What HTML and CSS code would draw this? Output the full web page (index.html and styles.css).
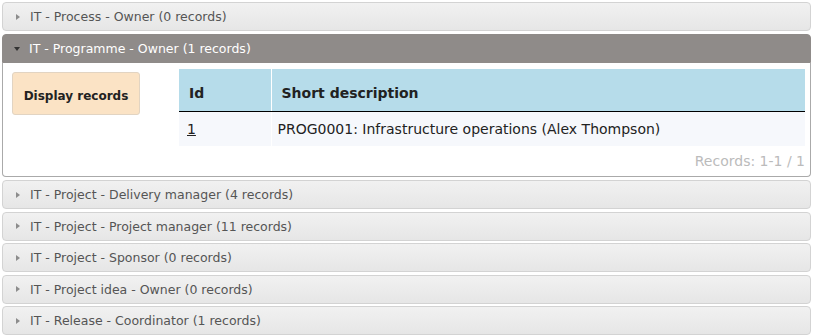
FILE: index.html
```html
<!DOCTYPE html>
<html lang="en">
<head>
  <meta charset="UTF-8">
  <title>Roles</title>
  <link rel="stylesheet" href="styles.css">
</head>
<body>
<div class="accordion">
  <h3 class="acc-header"><span class="arrow"></span>IT - Process - Owner (0 records)</h3>

  <h3 class="acc-header active"><span class="arrow"></span>IT - Programme - Owner (1 records)</h3>
  <div class="acc-content">
    <div class="side">
      <button class="btn">Display records</button>
    </div>
    <div class="results">
      <table class="grid">
        <thead>
          <tr><th class="col-id">Id</th><th>Short description</th></tr>
        </thead>
        <tbody>
          <tr><td><a href="#">1</a></td><td>PROG0001: Infrastructure operations (Alex Thompson)</td></tr>
        </tbody>
      </table>
      <div class="pager">Records: 1-1 / 1</div>
    </div>
  </div>

  <h3 class="acc-header"><span class="arrow"></span>IT - Project - Delivery manager (4 records)</h3>
  <h3 class="acc-header"><span class="arrow"></span>IT - Project - Project manager (11 records)</h3>
  <h3 class="acc-header"><span class="arrow"></span>IT - Project - Sponsor (0 records)</h3>
  <h3 class="acc-header"><span class="arrow"></span>IT - Project idea - Owner (0 records)</h3>
  <h3 class="acc-header"><span class="arrow"></span>IT - Release - Coordinator (1 records)</h3>
</div>
</body>
</html>
```

FILE: styles.css
```css
body {
  margin: 0;
  padding: 0 3px 0 2px;
  font-family: "DejaVu Sans", Verdana, sans-serif;
  background: #fff;
  color: #222;
}
.accordion {
  display: flex;
  flex-direction: column;
}
.acc-header {
  margin: 2.5px 0 0;
  height: 29px;
  box-sizing: border-box;
  display: flex;
  align-items: center;
  padding: 0 8px 0 13px;
  font-size: 12.5px;
  font-weight: normal;
  color: #555;
  background: linear-gradient(#f1f1f1, #e6e6e6);
  border: 1px solid #d3d3d3;
  border-radius: 4px;
}
.accordion .acc-header:first-child { margin-top: 2px; }
.arrow {
  width: 0;
  height: 0;
  margin-right: 10px;
  border-top: 3.5px solid transparent;
  border-bottom: 3.5px solid transparent;
  border-left: 4px solid #8c8c8c;
}
.acc-header.active {
  margin-top: 3px;
  background: #8f8b89;
  border-color: #8f8b89;
  color: #fff;
  border-radius: 4px 4px 0 0;
}
.acc-header.active .arrow {
  margin-left: -2px;
  margin-right: 9px;
  border-left: 3.5px solid transparent;
  border-right: 3.5px solid transparent;
  border-top: 4px solid #333;
  border-bottom: 0;
}
.acc-content {
  display: flex;
  gap: 39px;
  height: 114px;
  box-sizing: border-box;
  padding: 6px 5px 0 9px;
  border: 1px solid #aaa;
  border-top: 0;
  border-radius: 0 0 4px 4px;
  margin-bottom: 0.5px;
}
.side { padding-top: 3px; }
.btn {
  width: 128px;
  height: 43px;
  padding: 4px 0 0;
  background: #fbe3c5;
  border: 1px solid #e2d4c2;
  border-radius: 3px;
  font-family: "DejaVu Sans", Verdana, sans-serif;
  font-size: 12px;
  font-weight: bold;
  color: #222;
}
.results { flex: 1; }
.grid {
  width: 100%;
  border-collapse: collapse;
  font-size: 14px;
}
.grid th {
  background: #b6dcea;
  height: 42px;
  box-sizing: border-box;
  text-align: left;
  padding: 6px 10px 0;
  font-size: 14px;
  border-bottom: 1px solid #000;
  border-left: 1px solid #fff;
}
.grid th:first-child { border-left: 0; }
.grid .col-id { width: 92px; }
.grid td {
  background: #f6f8fc;
  height: 34px;
  padding: 0 6px 0 6px;
  border-left: 1px solid #fff;
  color: #222;
}
.grid td:first-child { border-left: 0; padding-left: 8px; }
.grid a { color: #222; }
.pager {
  text-align: right;
  color: #bbb;
  font-size: 14px;
  padding-top: 7px;
}
```
